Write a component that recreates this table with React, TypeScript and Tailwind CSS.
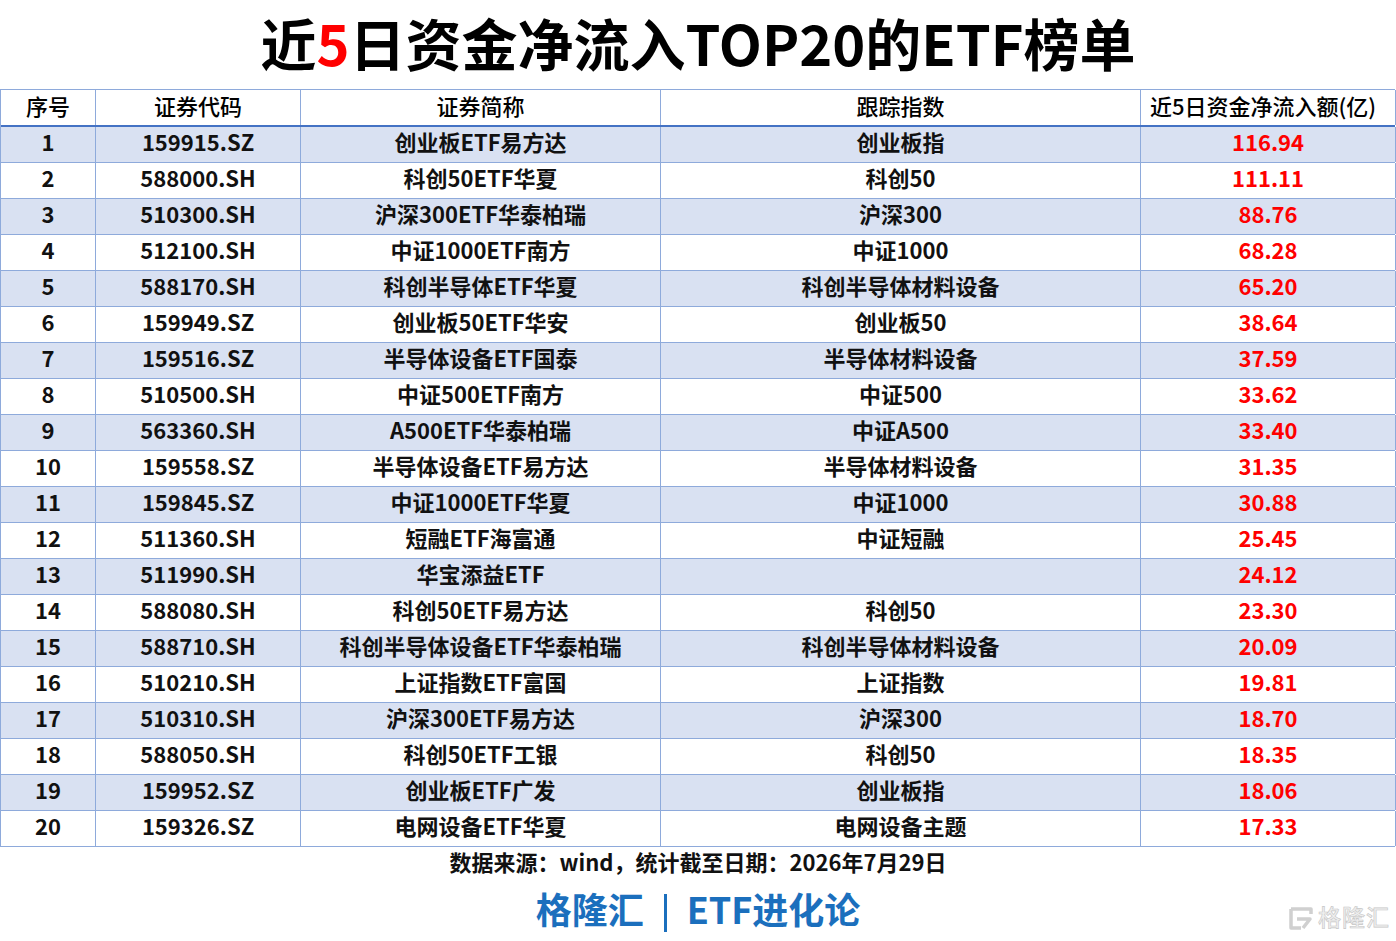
import React from "react";

const rows = [
  ["1", "159915.SZ", "创业板ETF易方达", "创业板指", "116.94"],
  ["2", "588000.SH", "科创50ETF华夏", "科创50", "111.11"],
  ["3", "510300.SH", "沪深300ETF华泰柏瑞", "沪深300", "88.76"],
  ["4", "512100.SH", "中证1000ETF南方", "中证1000", "68.28"],
  ["5", "588170.SH", "科创半导体ETF华夏", "科创半导体材料设备", "65.20"],
  ["6", "159949.SZ", "创业板50ETF华安", "创业板50", "38.64"],
  ["7", "159516.SZ", "半导体设备ETF国泰", "半导体材料设备", "37.59"],
  ["8", "510500.SH", "中证500ETF南方", "中证500", "33.62"],
  ["9", "563360.SH", "A500ETF华泰柏瑞", "中证A500", "33.40"],
  ["10", "159558.SZ", "半导体设备ETF易方达", "半导体材料设备", "31.35"],
  ["11", "159845.SZ", "中证1000ETF华夏", "中证1000", "30.88"],
  ["12", "511360.SH", "短融ETF海富通", "中证短融", "25.45"],
  ["13", "511990.SH", "华宝添益ETF", "", "24.12"],
  ["14", "588080.SH", "科创50ETF易方达", "科创50", "23.30"],
  ["15", "588710.SH", "科创半导体设备ETF华泰柏瑞", "科创半导体材料设备", "20.09"],
  ["16", "510210.SH", "上证指数ETF富国", "上证指数", "19.81"],
  ["17", "510310.SH", "沪深300ETF易方达", "沪深300", "18.70"],
  ["18", "588050.SH", "科创50ETF工银", "科创50", "18.35"],
  ["19", "159952.SZ", "创业板ETF广发", "创业板指", "18.06"],
  ["20", "159326.SZ", "电网设备ETF华夏", "电网设备主题", "17.33"],
];

const headers = ["序号", "证券代码", "证券简称", "跟踪指数", "近5日资金净流入额(亿)"];

const font = { fontFamily: '"Noto Sans CJK SC", "Noto Sans", sans-serif' };

export default function App() {
  return (
    <div className="relative w-[1396px] h-[941px] bg-white text-black overflow-hidden" style={font}>
      {/* Title */}
      <div className="h-[89px] flex items-center justify-center">
        <h1 className="text-[56px] font-bold leading-none pb-[6px]">
          近<span className="text-[#ff0000]">5</span>日资金净流入TOP20的ETF榜单
        </h1>
      </div>

      {/* Table */}
      <div className="w-[1395px] border-t border-l border-[#8eaadb]">
        <div className="grid grid-cols-[95px_205px_360px_480px_255px] h-[37px] border-b-2 border-[#4472c4]">
          {headers.map((h, j) => (
            <div
              key={h}
              className={`flex items-center justify-center border-r border-[#8eaadb] text-[22px] font-medium leading-none pb-[5px] ${
                j === 4 ? "pr-[10px]" : ""
              }`}
            >
              {h}
            </div>
          ))}
        </div>
        {rows.map((r, i) => (
          <div
            key={r[0]}
            className={`grid grid-cols-[95px_205px_360px_480px_255px] h-[36px] border-b border-[#8eaadb] ${
              i % 2 === 0 ? "bg-[#d9e1f2]" : "bg-white"
            }`}
          >
            {r.map((c, j) => (
              <div
                key={j}
                className={`flex items-center justify-center border-r border-[#8eaadb] text-[22px] font-bold leading-none pb-[7px] ${
                  j === 4 ? "text-[#ff0000]" : "text-[#111]"
                }`}
              >
                {c}
              </div>
            ))}
          </div>
        ))}
      </div>

      {/* Footer */}
      <div className="flex flex-col items-center">
        <div className="h-[36px] flex items-center text-[22px] font-bold leading-none text-[#111] pb-[8px]">
          数据来源：wind，统计截至日期：2026年7月29日
        </div>
        <div className="h-[56px] flex items-center text-[36px] font-bold leading-none text-[#1b6fbd] pb-[6px]">
          <span>格隆汇</span>
          <span className="mx-[20px] w-[3px] h-[38px] bg-[#1b6fbd] inline-block translate-y-[5px]"></span>
          <span>ETF进化论</span>
        </div>
      </div>

      {/* Watermark */}
      <div className="absolute right-[6px] bottom-[10px] flex items-center gap-[3px]">
        <svg width="27" height="25" viewBox="0 0 27 25" fill="none">
          <path
            d="M3 3 H23 V8 M3 3 V22 H13 M9 13 H22 L15 22"
            stroke="#d0d0d0"
            strokeWidth="3.5"
            strokeLinejoin="round"
            fill="none"
          />
        </svg>
        <span
          className="text-[23px] font-medium leading-none tracking-[1px] pb-[3px]"
          style={{ WebkitTextStroke: "0.6px #c6c6c6", color: "#efefef" }}
        >
          格隆汇
        </span>
      </div>
    </div>
  );
}
